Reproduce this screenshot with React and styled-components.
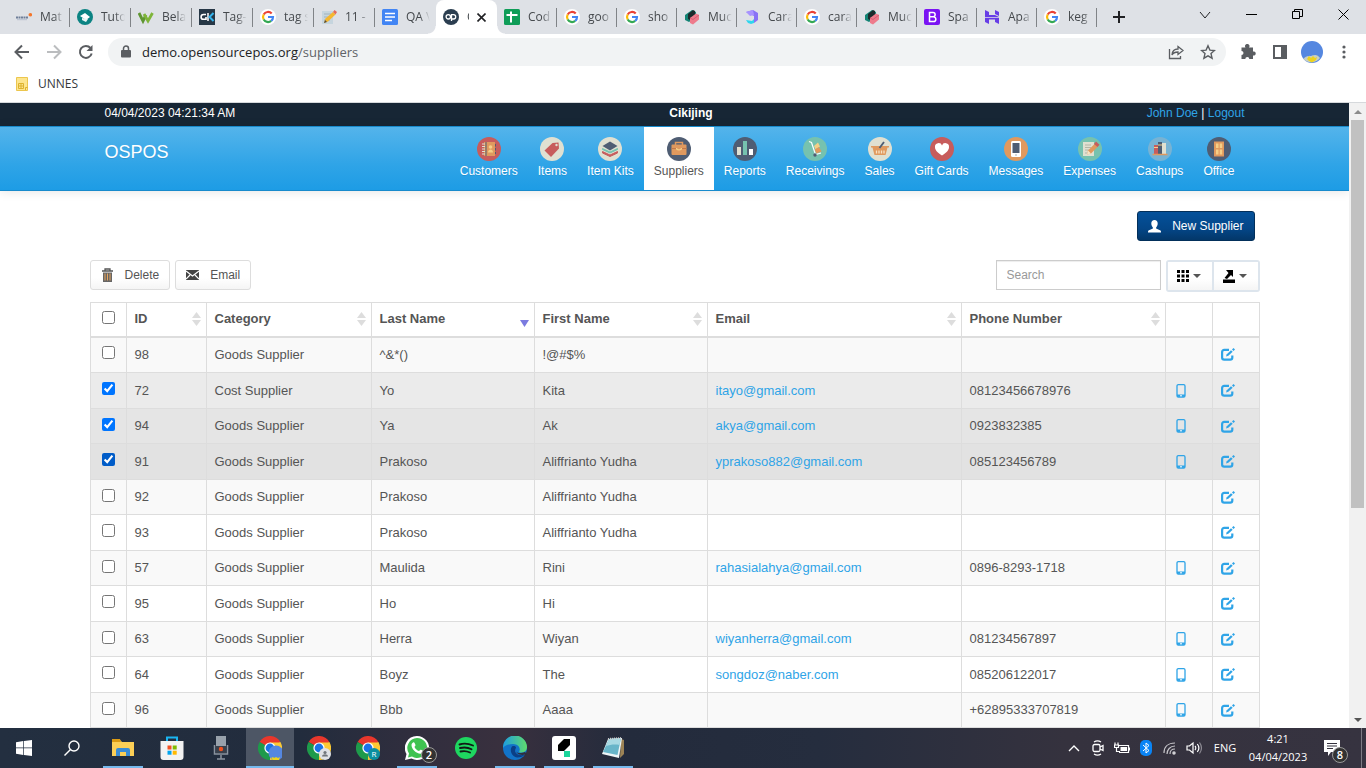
import React from 'react';
import styled, { createGlobalStyle, css } from 'styled-components';

const ui = '"Open Sans", "Noto Sans", sans-serif';
const web = '"Liberation Sans", Arial, sans-serif';

const GlobalStyle = createGlobalStyle`
  *, *::before, *::after { box-sizing: border-box; }
  body { margin: 0; background: #fff; color: #555; font: 13px/18px ${web}; }
  button { font: inherit; color: inherit; border: 0; background: none; padding: 0; }
  a { color: #2fa4e7; text-decoration: none; }
  svg { display: block; flex: none; }
`;

const Screen = styled.div`
  height: 100vh;
  display: grid;
  grid-template-rows: auto auto auto minmax(0, 1fr) auto;
  overflow: hidden;
`;

/* ---------- browser chrome ---------- */

const TabStrip = styled.header`
  display: flex;
  height: 34px;
  padding-left: 9px;
  background: #dee1e6;
  font: 12px/16px ${ui};
  color: #45494d;
`;

const Tab = styled.button`
  flex: 0 1 ${p => p.$w}px;
  min-width: 0;
  display: flex;
  align-items: center;
  gap: 8px;
  height: 34px;
  padding: 0 0 0 7px;
  position: relative;
  text-align: left;
  ${p => p.$active && css`
    background: #fff;
    border-radius: 8px 8px 0 0;
    &::before, &::after {
      content: '';
      position: absolute;
      bottom: 0;
      width: 8px;
      height: 8px;
    }
    &::before { left: -8px; background: radial-gradient(circle at 0 0, transparent 7px, #fff 8px); }
    &::after { right: -8px; background: radial-gradient(circle at 100% 0, transparent 7px, #fff 8px); }
  `}
  ${p => p.$line && css`
    &::after {
      content: '';
      position: absolute;
      right: 0;
      top: 8px;
      width: 1px;
      height: 19px;
      background: #808387;
    }
  `}
`;

const TabTitle = styled.span`
  width: ${p => (p.$w ? `${p.$w}px` : 'auto')};
  white-space: nowrap;
  mask-image: linear-gradient(90deg, #000 14px, transparent 24px);
`;

const NewTab = styled.button`
  width: 44px;
  display: grid;
  place-items: center;
`;

const WindowButtons = styled.div`
  display: flex;
  margin-left: auto;
`;

const WindowButton = styled.button`
  width: 46px;
  height: 29px;
  display: grid;
  place-items: center;
`;

const Toolbar = styled.div`
  display: flex;
  align-items: center;
  height: 36px;
  padding: 0 6px;
`;

const ToolButton = styled.button`
  width: 32px;
  height: 28px;
  display: grid;
  place-items: center;
`;

const Omnibox = styled.div`
  flex: 1;
  display: flex;
  align-items: center;
  height: 28px;
  margin: 0 6px;
  padding: 0 2px 0 12px;
  border-radius: 14px;
  background: #f1f3f4;
`;

const Address = styled.div`
  flex: 1;
  display: flex;
  align-items: center;
  gap: 10px;
`;

const AddressText = styled.a`
  font: 13px/20px ${ui};
  color: #5f6368;
  b { font-weight: 400; color: #202124; }
`;

const Bookmarks = styled.nav`
  display: flex;
  align-items: center;
  height: 33px;
  padding: 0 16px 5px;
  border-bottom: 1px solid #d6d9dc;
`;

const Bookmark = styled.a`
  display: flex;
  align-items: center;
  gap: 10px;
  font: 12px/16px ${ui};
  color: #35383b;
`;

/* ---------- page ---------- */

const Viewport = styled.div`
  display: flex;
  min-height: 0;
  overflow: hidden;
`;

const Page = styled.div`
  flex: 1;
  min-width: 0;
  overflow: hidden;
`;

const Container = styled.div`
  max-width: 1170px;
  margin: 0 auto;
`;

const TopBar = styled.div`
  background: #172635;
  color: #fff;
  font-size: 12px;
`;

const TopBarInner = styled(Container)`
  display: flex;
  justify-content: space-between;
  padding: 1px 15px 4px;
`;

const NavBar = styled.div`
  background: linear-gradient(#54b4eb, #2fa4e7 60%, #1d9ce5);
  border-top: 1px solid #178acc;
  border-bottom: 1px solid #178acc;
  box-shadow: 0 1px 10px rgba(0, 0, 0, 0.1);
`;

const NavInner = styled(Container)`
  display: flex;
  justify-content: space-between;
  padding: 0 15px;
`;

const Brand = styled.a`
  padding-top: 15px;
  font-size: 18px;
  line-height: 20px;
  color: #fff;
  text-shadow: 0 1px 0 rgba(0, 0, 0, 0.1);
`;

const Modules = styled.nav`
  display: flex;
`;

const Module = styled.a`
  display: flex;
  flex-direction: column;
  align-items: center;
  gap: 1px;
  height: 63px;
  padding: 10px 10px 0;
  font-size: 12px;
  color: ${p => (p.$active ? '#555' : '#fff')};
  background: ${p => (p.$active ? '#fff' : 'transparent')};
  text-shadow: ${p => (p.$active ? 'none' : '0 1px 0 rgba(0, 0, 0, 0.1)')};
`;

const TitleBar = styled.div`
  display: flex;
  justify-content: flex-end;
  padding: 20px 5px 19px;
`;

const ActionBar = styled.div`
  display: flex;
  align-items: flex-start;
  gap: 5px;
  padding-bottom: 10px;
`;

const Button = styled.button`
  display: flex;
  align-items: center;
  gap: 11px;
  height: 30px;
  padding: 0 10px;
  border: 1px solid ${p => (p.$primary ? '#022f5a' : '#ddd')};
  border-radius: 3px;
  background: ${p => (p.$primary ? 'linear-gradient(#04519b, #044687 60%, #033769)' : 'linear-gradient(#fff, #fff 60%, #f5f5f5)')};
  color: ${p => (p.$primary ? '#fff' : '#555')};
  font-size: 12px;
`;

const Search = styled.input`
  width: 165px;
  height: 30px;
  margin-left: auto;
  padding: 0 10px;
  border: 1px solid #ccc;
  border-radius: 0;
  box-shadow: inset 0 1px 1px rgba(0, 0, 0, 0.075);
  font: 12px ${web};
  &::placeholder { color: #999; }
`;

const ButtonGroup = styled.div`
  display: flex;
  border: 2px solid #dde5ed;
  border-radius: 3px;
`;

const MenuButton = styled.button`
  display: flex;
  align-items: center;
  justify-content: center;
  gap: 4px;
  width: ${p => (p.$divided ? 46 : 44)}px;
  height: 28px;
  padding-right: 2px;
  background: linear-gradient(#fff, #fff 60%, #f5f5f5);
  border-left: ${p => (p.$divided ? '2px solid #dde5ed' : '0')};
`;

const Table = styled.table`
  width: 100%;
  table-layout: fixed;
  border-collapse: collapse;
  th, td {
    border: 1px solid #ddd;
    padding: 0 8px;
    text-align: left;
    white-space: nowrap;
  }
  th {
    height: 34px;
    padding-right: 5px;
    padding-bottom: 1px;
    border-bottom-width: 2px;
  }
`;

const SortHead = styled.div`
  display: flex;
  align-items: center;
  justify-content: space-between;
`;

const tones = ['', '#ebebeb', '#e5e5e5', '#e2e2e2'];

const Row = styled.tr`
  height: 36px;
  background: #fff;
  &:nth-child(odd) { background: #f9f9f9; }
  &:nth-child(2n + 3) { height: 35px; }
  &&& { ${p => p.$tone > 0 && css`background: ${tones[p.$tone]};`} }
`;

const Check = styled.input`
  display: block;
  width: 13px;
  height: 13px;
  margin: 0 auto 4px;
  accent-color: ${p => (p.$dark ? '#005cc8' : 'auto')};
`;

const CheckCell = styled.td`
  && { padding: 0; }
`;

const ScrollTrack = styled.div`
  width: 17px;
  display: flex;
  flex-direction: column;
  align-items: center;
  background: #f1f1f1;
`;

const ScrollButton = styled.button`
  width: 17px;
  height: 17px;
  display: grid;
  place-items: center;
`;

const ScrollThumb = styled.div`
  width: 13px;
  height: 62%;
  margin-bottom: auto;
  background: #c1c1c1;
`;

/* ---------- taskbar ---------- */

const TaskBar = styled.footer`
  display: flex;
  height: 40px;
  background: linear-gradient(90deg, #232f40, #222c3d 22%, #302e3e 30%, #39303e 37%, #232b3c 46%, #252d3e 60%, #35323e 78%, #363340);
  color: #fff;
`;

const TaskButton = styled.button`
  width: 48px;
  display: grid;
  place-items: center;
  position: relative;
  margin-right: ${p => (p.$pinned ? 1 : 0)}px;
  background: ${p => (p.$active ? '#4d5665' : 'none')};
  &::after {
    content: '';
    position: absolute;
    left: ${p => (p.$active ? 0 : 4)}px;
    right: ${p => (p.$active ? 0 : 4)}px;
    bottom: 0;
    height: 2px;
    background: ${p => (p.$open || p.$active ? '#76b9ed' : 'none')};
  }
`;

const Gap = styled.div`
  width: 3px;
`;

const Badge = styled.span`
  position: absolute;
  left: ${p => p.$x}px;
  top: ${p => p.$y}px;
  width: 16px;
  height: 16px;
  border: 1px solid #9a9a9a;
  border-radius: 50%;
  background: #333;
  font: 600 11px/14px ${ui};
  text-align: center;
`;

const Tray = styled.div`
  display: flex;
  align-items: center;
  margin-left: auto;
  padding-right: 4px;
  font: 11px/18px ${ui};
`;

const TrayButton = styled.button`
  width: 24px;
  height: 40px;
  display: grid;
  place-items: center;
`;

const Language = styled.button`
  width: 38px;
`;

const Clock = styled.button`
  width: 68px;
`;

const Notices = styled.button`
  position: relative;
  width: 40px;
  height: 40px;
  display: grid;
  place-items: center;
`;

const ShowDesktop = styled.button`
  width: 10px;
  height: 40px;
  border-right: 1px solid #7d7b84;
`;

/* ---------- favicons ---------- */

const Fav = ({ children }) => <svg width="16" height="16" viewBox="0 0 16 16">{children}</svg>;

const GoogleIcon = () => (
  <Fav>
    <circle cx="8" cy="8" r="8" fill="#fff" />
    <g fill="none" strokeWidth="2.2">
      <path d="M11.7 4.5A5 5 0 0 0 3.7 5.5" stroke="#ea4335" />
      <path d="M3.7 5.5a5 5 0 0 0 0 5" stroke="#fbbc05" />
      <path d="M3.7 10.5a5 5 0 0 0 7.5 1.4" stroke="#34a853" />
      <path d="M8 8h5a5 5 0 0 1-1.8 3.9" stroke="#4285f4" />
    </g>
  </Fav>
);

const MudIcon = () => (
  <Fav>
    <path d="M1 6l7-5 4 2v5l-7 5-4-2z" fill="#138475" />
    <path d="M4 5l5-4 2 1v5l-5 4-2-1z" fill="#1c2b2c" />
    <path d="M6 9l6-4.500 3 1.500v4.500L9 15.500 6 14z" fill="#ee7b8c" />
    <path d="M6 9l3 1.500 6-4.500" fill="none" stroke="#d45f73" />
  </Fav>
);

const favicons = {
  elearning: (
    <Fav>
      <path d="M0 8.500h12" stroke="#6f7f99" strokeWidth="2" strokeDasharray="2 .5" />
      <circle cx="14.300" cy="5.700" r="1.800" fill="#f4762b" />
      <path d="M1 10.700h10" stroke="#b7c0d0" />
    </Fav>
  ),
  tutor: (
    <Fav>
      <circle cx="8" cy="8" r="8" fill="#0b8383" />
      <path d="M3 7l5-3 5 4-4 3z" fill="#fff" />
      <path d="M5 9v2l4 2 2-3z" fill="#e9f5f4" />
    </Fav>
  ),
  w: (
    <Fav>
      <path d="M1 4l4 8 3-6" fill="none" stroke="#5f9632" strokeWidth="2.800" />
      <path d="M6 5l4 7 4.500-8" fill="none" stroke="#7fb53a" strokeWidth="2.800" />
    </Fav>
  ),
  ok: (
    <Fav>
      <path d="M0 0h16v16H0z" fill="#263746" />
      <path d="M7 5.500H4.500a2.200 2.200 0 0 0 0 4.800H7V8" fill="none" stroke="#fff" strokeWidth="1.600" />
      <path d="M9 4v8" stroke="#fff" strokeWidth="1.500" />
      <path d="M14.500 4L10.500 8l4 4" fill="none" stroke="#35b5ee" strokeWidth="2" />
    </Fav>
  ),
  google: <GoogleIcon />,
  memo: (
    <Fav>
      <path d="M1 2h11v13H1z" fill="#c6d5de" />
      <path d="M3 5h7M3 8h6M3 11h6" stroke="#9fb2bd" />
      <path d="M3 14l1.500-4.500L12 3l2.500 2.500-7.500 7z" fill="#f5b72f" />
      <path d="M12 3l1.500-2L16 3l-1.500 2.500z" fill="#e56b5a" />
      <path d="M3 14l1-3 2 2z" fill="#4e4a43" />
    </Fav>
  ),
  docs: (
    <Fav>
      <rect width="16" height="16" rx="1.500" fill="#4285f4" />
      <path d="M3 4.500h10M3 8h10M3 11.500h7" stroke="#fff" strokeWidth="1.500" />
    </Fav>
  ),
  ospos: (
    <Fav>
      <circle cx="8" cy="8" r="8" fill="#2b3e50" />
      <circle cx="5.300" cy="7.800" r="2.200" fill="none" stroke="#fff" strokeWidth="1.300" />
      <path d="M8.500 12V5.600h2a2.200 2.200 0 0 1 0 4.400H9" fill="none" stroke="#fff" strokeWidth="1.300" />
    </Fav>
  ),
  sheets: (
    <Fav>
      <rect width="16" height="16" rx="1.500" fill="#0f9d58" />
      <path d="M2.500 6h11M7 2.500v11" stroke="#fff" strokeWidth="2" />
    </Fav>
  ),
  mud: <MudIcon />,
  arrow: (
    <Fav>
      <path d="M2 3l7-2 5 3v7l-4 3V7z" fill="#8872f5" />
      <path d="M2 3l7-2 1 5-4 1z" fill="#a893ff" />
      <path d="M2 11l6 1 2-2v4l-3 1-3-1z" fill="#2fd5ee" />
    </Fav>
  ),
  bootstrap: (
    <Fav>
      <rect width="16" height="16" rx="2" fill="#7a13f3" />
      <path d="M5.500 3.500H9a2 2 0 0 1 0 4.300H5.500zM5.500 7.800h4a2.300 2.300 0 0 1 0 4.700h-4z" fill="none" stroke="#fff" strokeWidth="1.500" />
    </Fav>
  ),
  h: (
    <Fav>
      <path d="M1 1l4 2v3h6l4 2H1zM11 1l4 2v4l-4-2zM1 8.700h14V15l-4-2v-2.500H5V15l-4-2z" fill="#673de6" />
    </Fav>
  ),
};

const tabs = [
  ['elearning', 'Mat'], ['tutor', 'Tuto'], ['w', 'Bela'], ['ok', 'Tag-'], ['google', 'tag s'],
  ['memo', '11 -'], ['docs', 'QA \\'], ['ospos', 'O'], ['sheets', 'Cod'], ['google', 'goo'],
  ['google', 'sho'], ['mud', 'Muc'], ['arrow', 'Cara'], ['google', 'cara'], ['mud', 'Muc'],
  ['bootstrap', 'Spa'], ['h', 'Apa'], ['google', 'keg'],
];

/* ---------- line icons ---------- */

const Line = ({ size = 16, w = 1, color = '#202124', children }) => (
  <svg width={size} height={size} viewBox={`0 0 ${size} ${size}`} fill="none" stroke={color} strokeWidth={w}>{children}</svg>
);

const SortIcon = ({ active }) => (
  <svg width="9" height="16" viewBox="0 0 9 16" fill={active ? '#7b7be0' : '#ddd'}>
    {!active && <path d="M4.500 1L9 7H0z" />}
    {active ? <path d="M0 9h9l-4.500 7z" /> : <path d="M0 9h9l-4.500 6z" />}
  </svg>
);

const TrashIcon = () => (
  <svg width="13" height="14" viewBox="0 0 13 14">
    <path d="M1 3h11M4 2.500V1h5v1.500" fill="none" stroke="#555" strokeWidth="1.300" />
    <path d="M2 4.500h9V14H2z" fill="#666" />
    <path d="M4 5.500v7M6.500 5.500v7M9 5.500v7" stroke="#e9a55b" />
  </svg>
);

const MailIcon = () => (
  <svg width="13" height="12" viewBox="0 0 13 12">
    <path d="M0 1h13v10H0z" fill="#444" />
    <path d="M0 2l6.500 5L13 2M0 10l4-4M13 10L9 6" fill="none" stroke="#fff" strokeWidth="1.200" />
  </svg>
);

const UserIcon = () => (
  <svg width="13" height="13" viewBox="0 0 13 13" fill="#fff">
    <path d="M6.500 0C8.500 0 9.700 1.300 9.700 3.500c0 1.800-.8 3.200-1.600 4v1l3.900 1.700c.7.300 1 .8 1 1.600V12.500H0v-.7c0-.8.300-1.300 1-1.600l3.900-1.700v-1c-.8-.8-1.600-2.200-1.600-4C3.300 1.300 4.500 0 6.500 0z" />
  </svg>
);

const GridIcon = () => (
  <svg width="12" height="12" viewBox="0 0 12 12">
    <path d="M0 0h3v3H0zM4.500 0h3v3h-3zM9 0h3v3H9zM0 4.500h3v3H0zM4.500 4.500h3v3h-3zM9 4.500h3v3H9zM0 9h3v3H0zM4.500 9h3v3h-3zM9 9h3v3H9z" />
  </svg>
);

const ExportIcon = () => (
  <svg width="12" height="13" viewBox="0 0 12 13">
    <path d="M0 9.500h12V13H0zM3 0h7v7L8 5 4 9 1.500 8 5.500 3z" />
  </svg>
);

const Caret = () => <svg width="8" height="4" viewBox="0 0 8 4"><path d="M0 0h8L4 4z" fill="#555" /></svg>;

const PhoneIcon = () => (
  <svg width="14" height="14" viewBox="0 0 14 14">
    <rect x="3" y=".7" width="8" height="12.300" rx="1.300" fill="none" stroke="#2fa4e7" strokeWidth="1.300" />
    <path d="M3 10.500h8v2.300H3z" fill="#2fa4e7" />
    <path d="M6 11.800h2" stroke="#fff" />
  </svg>
);

const EditIcon = () => (
  <svg width="14" height="13" viewBox="0 0 14 13" fill="none" stroke="#2fa4e7">
    <path d="M8 1.900H3.200a2.100 2.100 0 0 0-2.100 2.100v5.500a2.100 2.100 0 0 0 2.100 2.100h6a2.100 2.100 0 0 0 2.100-2.100V7.500" strokeWidth="2.200" />
    <path d="M5 8.500l.8-2.200L10 2.200l1.700 1.600-4.400 4z" fill="#2fa4e7" stroke="none" />
    <path d="M11 1.500l1.500 1.600L14 1.600 12.500 0z" fill="#2fa4e7" stroke="none" />
  </svg>
);

/* ---------- module icons ---------- */

const Disc = ({ bg, children }) => (
  <svg width="24" height="24" viewBox="0 0 24 24"><circle cx="12" cy="12" r="12" fill={bg} />{children}</svg>
);

const modules = [
  ['Customers', <Disc bg="#c75c5c"><path d="M7 5h11v14H7z" fill="#e0995e" /><path d="M9 5v14" stroke="#4f5d73" /><path d="M5 7h3M5 9.500h3M5 12h3M5 14.500h3M5 17h3" stroke="#e0e0d1" /><circle cx="13.500" cy="10" r="1.800" fill="#f5cf87" /><path d="M11 15.500c0-4 5-4 5 0z" fill="#f5cf87" /><path d="M18.500 7v10" stroke="#4f5d73" strokeDasharray="2.500 1.500" /></Disc>],
  ['Items', <Disc bg="#e0e0d1"><path d="M4.500 13.500L12.500 6l6-.5.5 6-8 8.500z" fill="#c75c5c" /><circle cx="16.500" cy="8" r="1.200" fill="#e0e0d1" /></Disc>],
  ['Item Kits', <Disc bg="#e0e0d1"><path d="M4.500 14.500l7.500 3.500 7.500-3.500v1.500L12 19.500 4.500 16z" fill="#c75c5c" stroke="#c75c5c" /><path d="M4.500 11.500L12 15l7.500-3.500v1L12 16l-7.500-3.500z" fill="#76c2af" stroke="#76c2af" /><path d="M4.500 9L12 4.500 19.500 9 12 13.500z" fill="#4f5d73" /></Disc>],
  ['Suppliers', <Disc bg="#4f5d73"><path d="M8.500 8V5.500h7V8" fill="none" stroke="#e0995e" strokeWidth="1.500" /><rect x="4.500" y="7.500" width="15" height="10.500" rx="1" fill="#e0995e" /><path d="M4.500 11.500h5M14.500 11.500h5" stroke="#c2794a" /><path d="M9.500 11c0 2.500 5 2.500 5 0" fill="none" stroke="#f5cf87" strokeWidth="1.300" /></Disc>],
  ['Reports', <Disc bg="#4f5d73"><path d="M4 10h4v8H4z" fill="#e0e0d1" /><path d="M10 4h4v14h-4z" fill="#76c2af" /><path d="M16 12h4v6h-4z" fill="#fff" /></Disc>],
  ['Receivings', <Disc bg="#76c2af"><path d="M11 9l4-3.500 2 4-4.500 3z" fill="#f5cf87" /><path d="M11.500 12.500l4.500-2.500 2.500 4.500-5 2z" fill="#e0995e" /><path d="M6 4.500l2.500 1 4 12 5.500-1.500" fill="none" stroke="#fff" strokeWidth="1.200" /><circle cx="12" cy="18" r="1.700" fill="#4f5d73" /></Disc>],
  ['Sales', <Disc bg="#e0e0d1"><path d="M3 9h18v1.500h-1.500L17.500 18h-11l-2-7.500H3z" fill="#e0995e" /><path d="M8.500 13.500v3M11 13.500v3M13.500 13.500v3M16 13.500v3" stroke="#f8e2c5" strokeWidth="1.300" /><path d="M16 5l-4.500 6" stroke="#4f5d73" strokeWidth="1.800" /></Disc>],
  ['Gift Cards', <Disc bg="#c75c5c"><path d="M12 18.500C6.500 15 5 12.500 5 10a3.600 3.600 0 0 1 7-1.400A3.600 3.600 0 0 1 19 10c0 2.500-1.500 5-7 8.500z" fill="#fff" /></Disc>],
  ['Messages', <Disc bg="#e0995e"><rect x="7" y="4" width="10" height="16" rx="1.500" fill="#fff" /><path d="M8.500 6h7v10h-7z" fill="#4f5d73" /><circle cx="12" cy="18" r="1" fill="#c4ccd4" /></Disc>],
  ['Expenses', <Disc bg="#76c2af"><path d="M5 5h11v14H5z" fill="#e0e0d1" /><path d="M7 8h6M7 10.500h6M7 13h4M7 16h3" stroke="#b3b6a6" /><path d="M9 17.500l1-4 7-7 3 3-7 7z" fill="#e0995e" /><path d="M16 7l2-2.500 3.500 3.200L19.500 10z" fill="#c75c5c" /><path d="M9 17.500l1-4 3 3z" fill="#f5e4c5" /></Disc>],
  ['Cashups', <Disc bg="#77b3d4"><path d="M6 8h4v9H6z" fill="#c75c5c" /><path d="M10 5h4v12h-4z" fill="#4f5d73" /><path d="M14 6h4v11h-4z" fill="#e0e0d1" /><path d="M4.500 17.500h15" stroke="#e0995e" strokeWidth="1.500" /><path d="M6 10.500h4M10 8h4" stroke="#f5cf87" /></Disc>],
  ['Office', <Disc bg="#4f5d73"><path d="M7 4.500h10v15H7z" fill="#e0995e" /><path d="M9 6.500h2.500v4.500H9zM12.700 6.500h2.500v4.500h-2.500zM9 12.500h2.500v5H9zM12.700 12.500h2.500v5h-2.500z" fill="#f5cf87" /></Disc>],
];

/* ---------- taskbar icons ---------- */

const Svg24 = ({ children }) => <svg width="24" height="24" viewBox="0 0 24 24">{children}</svg>;

const ChromeIcon = ({ children }) => (
  <Svg24>
    <path d="M12 12L1.600 6A12 12 0 0 1 22.400 6z" fill="#e8372c" />
    <path d="M12 12L22.400 6A12 12 0 0 1 12 24z" fill="#fcc934" />
    <path d="M12 12v12A12 12 0 0 1 1.600 6z" fill="#1e9a4b" />
    <path d="M12 6.500h10.400L17 15z" fill="#fcc934" />
    <circle cx="12" cy="12" r="5.600" fill="#fff" />
    <circle cx="12" cy="12" r="4.400" fill="#1a73e8" />
    {children}
  </Svg24>
);

const Avatar = ({ size }) => (
  <svg width={size} height={size} viewBox="0 0 22 22">
    <circle cx="11" cy="11" r="11" fill="#5587e0" />
    <path d="M2.500 18C6 13.500 9 16 11 14.500c3-1 6-1 8 2.500a11 11 0 0 1-16.500 1z" fill="#c9d0c2" />
    <path d="M6 18l2-3 2 2 2-2 2 2 2-1-1 3-4 2.500L8 20z" fill="#edd31e" />
  </svg>
);

const taskApps = [
  { name: 'File Explorer', open: true, icon: <Svg24><path d="M1 4h8l2 2h12v14H1z" fill="#fccf56" /><path d="M1 3h8l1 3H1z" fill="#db9b14" /><path d="M5 20v-6a2 2 0 0 1 2-2h10a2 2 0 0 1 2 2v6h-4v-4H9v4z" fill="#3a8cd5" /></Svg24> },
  { name: 'Microsoft Store', icon: <Svg24><path d="M7 6V1.500h10V6" fill="none" stroke="#1ab5f2" strokeWidth="2" /><path d="M0.500 5h23v16a3 3 0 0 1-3 3h-17a3 3 0 0 1-3-3z" fill="#f2f2f2" /><path d="M7.500 9.500h4v4h-4z" fill="#f25022" /><path d="M12.700 9.500h4v4h-4z" fill="#7fba00" /><path d="M7.500 14.700h4v4h-4z" fill="#00a4ef" /><path d="M12.700 14.700h4v4h-4z" fill="#ffb900" /></Svg24> },
  { name: 'Voice Recorder', icon: <Svg24><path d="M7 0h10v10H7z" fill="#98a1ab" /><path d="M7 10h10v7H7z" fill="#39404b" /><circle cx="12" cy="13" r="2.200" fill="#f0501e" /><path d="M5.500 9v9h13V9M12 19v4M8 23h8" fill="none" stroke="#8a939e" strokeWidth="1.500" /></Svg24> },
  { name: 'Chrome', active: true, icon: <ChromeIcon><circle cx="18" cy="17" r="7.500" fill="#5587e0" /><path d="M13 22l2-1 1 1 2-1 2 1 2-1-1 3h-6z" fill="#edd31e" /></ChromeIcon> },
  { name: 'Chrome guest', icon: <ChromeIcon><circle cx="18" cy="18" r="6" fill="#dfe1e5" /><circle cx="18" cy="16.500" r="1.600" fill="#70757a" /><path d="M15 20.500c0-3 6-3 6 0z" fill="#70757a" /></ChromeIcon> },
  { name: 'Chrome R', icon: <ChromeIcon><circle cx="18" cy="18" r="6" fill="#0b8f9f" /><text x="18" y="21" fontSize="8" textAnchor="middle" fill="#fff" fontFamily="Open Sans">R</text></ChromeIcon> },
  { name: 'WhatsApp', open: true, badge: true, icon: <Svg24><path d="M12 0a12 12 0 1 1-5.500 22.600L0 24l1.500-6A12 12 0 0 1 12 0z" fill="#fff" /><path d="M12 2a10 10 0 1 1-5 18.600L3 21.500l1-4A10 10 0 0 1 12 2z" fill="#3fc351" /><path d="M8 6.500c1-.5 1.500 0 2.500 2.500 0 1-1 1.500-1 2 1 2 2.500 3.500 4.500 4 1-.8 1.500-1.500 2-1.200l2 1c.5.500-.5 3-2.500 3C11 17.500 6.500 13 6.500 9c0-1.200.8-2 1.500-2.500z" fill="#fff" /></Svg24> },
  { name: 'Spotify', icon: <Svg24><circle cx="12" cy="12" r="11" fill="#1ed760" /><path d="M5.500 8.500c4.500-1.500 9-1 13.500 1M6 12c4-1 8-.7 11.500 1.300M6.500 15.500c3.500-.8 6.500-.5 9.500 1" fill="none" stroke="#111a15" strokeWidth="1.900" strokeLinecap="round" /></Svg24> },
  { name: 'Edge', open: true, icon: <Svg24><defs><linearGradient id="edge-a"><stop stopColor="#1e9de0" /><stop offset="1" stopColor="#5fdc6c" /></linearGradient></defs><circle cx="12" cy="12" r="12" fill="#1273c8" /><path d="M0 12A12 12 0 0 1 24 11c0 5-5 6.500-8 5 2-3 0-8-6-8C5 8 1 10 0 12z" fill="url(#edge-a)" /><path d="M9 10.500c-3 4 0 10 5 11 3 .2 6-1 8-3-5 2-10-.5-10-4 0-1.500 1-2 1-3s-2-2-4-1z" fill="#0b3f86" /><path d="M13 13c-1 3 2 5.500 9 3l2 2-7 5c2-1 4-2.500 5-4.500-5 1.500-10-1.500-9-5.500z" fill="#302f3e" /></Svg24> },
  { name: 'Katalon', open: true, icon: <Svg24><rect width="24" height="24" rx="3" fill="#fff" /><path d="M6 9l6-6h6v6l-6 6H6z" fill="#000" /><path d="M12 15h6v6h-6z" fill="#1cd69b" /></Svg24> },
  { name: 'Notepad', open: true, icon: <Svg24><path d="M20 3l3 1v14l-4 4z" fill="#9c8355" /><path d="M7 3l14-1-3 20-17-4z" fill="#eef5f7" /><path d="M8 3l12-1-3.500 17L2 16z" fill="#68b5c9" /><path d="M8 3l12-1-1.500 7C13 8 9 9 5 10z" fill="#a8d9e3" /><path d="M7 3l14-1" stroke="#ccc" strokeDasharray="1 1" strokeWidth="2" /></Svg24> },
];

/* ---------- data ---------- */

const columns = [
  ['ID', 80], ['Category', 165], ['Last Name', 163], ['First Name', 173], ['Email', 254], ['Phone Number', 204],
];

const suppliers = [
  ['98', 'Goods Supplier', '^&*()', '!@#$%', '', '', 0],
  ['72', 'Cost Supplier', 'Yo', 'Kita', 'itayo@gmail.com', '08123456678976', 1],
  ['94', 'Goods Supplier', 'Ya', 'Ak', 'akya@gmail.com', '0923832385', 2],
  ['91', 'Goods Supplier', 'Prakoso', 'Aliffrianto Yudha', 'yprakoso882@gmail.com', '085123456789', 3],
  ['92', 'Goods Supplier', 'Prakoso', 'Aliffrianto Yudha', '', '', 0],
  ['93', 'Goods Supplier', 'Prakoso', 'Aliffrianto Yudha', '', '', 0],
  ['57', 'Goods Supplier', 'Maulida', 'Rini', 'rahasialahya@gmail.com', '0896-8293-1718', 0],
  ['95', 'Goods Supplier', 'Ho', 'Hi', '', '', 0],
  ['63', 'Goods Supplier', 'Herra', 'Wiyan', 'wiyanherra@gmail.com', '081234567897', 0],
  ['64', 'Goods Supplier', 'Boyz', 'The', 'songdoz@naber.com', '085206122017', 0],
  ['96', 'Goods Supplier', 'Bbb', 'Aaaa', '', '+62895333707819', 0],
];

function Browser() {
  return (
    <>
      <TabStrip>
        {tabs.map(([icon, title], i) => (
          <Tab key={i} $w={i < 8 ? 61 : 60} $active={i === 7} $line={i !== 6 && i !== 7}>
            {favicons[icon]}
            <TabTitle $w={i === 7 ? 2 : 0}>{title}</TabTitle>
            {i === 7 && <Line size={9} w={1.6}><path d="M.5.5l8 8M8.500.5l-8 8" /></Line>}
          </Tab>
        ))}
        <NewTab aria-label="New tab"><Line size={12} w={2}><path d="M6 0v12M0 6h12" /></Line></NewTab>
        <WindowButtons>
          <WindowButton aria-label="Search tabs"><Line size={12}><path d="M1 3l5 6 5-6" /></Line></WindowButton>
          <WindowButton aria-label="Minimize"><Line size={11} color="#000"><path d="M0 5.500h11" /></Line></WindowButton>
          <WindowButton aria-label="Restore"><Line size={11} color="#000"><path d="M.5 2.500h7v7h-7zM2.500 2.500v-2h8v7h-3" /></Line></WindowButton>
          <WindowButton aria-label="Close"><Line size={11} color="#000"><path d="M.5.5l10 10M10.500.5l-10 10" /></Line></WindowButton>
        </WindowButtons>
      </TabStrip>
      <Toolbar>
        <ToolButton aria-label="Back"><Line w={2} color="#5a5d61"><path d="M15 8H2M8 1.500L1.500 8 8 14.500" /></Line></ToolButton>
        <ToolButton aria-label="Forward"><Line w={2} color="#bbbdbf"><path d="M1 8h13M8 1.500L14.500 8 8 14.500" /></Line></ToolButton>
        <ToolButton aria-label="Reload"><Line w={2} color="#5a5d61"><path d="M13.700 9.500A6 6 0 1 1 12.500 4" /><path d="M14.500 1v6h-6z" fill="#5a5d61" stroke="none" /></Line></ToolButton>
        <Omnibox>
          <Address>
            <svg width="12" height="14" viewBox="0 0 12 14"><path d="M2 5h8a1 1 0 0 1 1 1v5.500a1 1 0 0 1-1 1H2a1 1 0 0 1-1-1V6a1 1 0 0 1 1-1z" fill="#5a5d61" /><path d="M3.500 5V3.500a2.500 2.500 0 0 1 5 0V5" fill="none" stroke="#5a5d61" strokeWidth="1.500" /></svg>
            <AddressText href="#suppliers"><b>demo.opensourcepos.org</b>/suppliers</AddressText>
          </Address>
          <ToolButton aria-label="Share"><Line w={1.3} color="#5a5d61"><path d="M1.500 5v9.500h11V12" /><path d="M10 2.500l5 4-5 4V8c-3 0-5 1-6 3 .2-3.500 2-6 6-6z" /></Line></ToolButton>
          <ToolButton aria-label="Bookmark"><Line w={1.4} color="#5a5d61"><path d="M8 1.800l1.900 4.300 4.600.4-3.500 3.100 1.100 4.600L8 11.800l-4.100 2.400L5 9.600 1.500 6.500l4.600-.4z" /></Line></ToolButton>
        </Omnibox>
        <ToolButton aria-label="Extensions"><svg width="16" height="16" viewBox="0 0 16 16"><path d="M1.500 3.500h4a2.200 2.200 0 1 1 3.500 0h4V7.500a2.100 2.100 0 1 1 0 4V15H9.300a2 2 0 1 0-4 0H1.500v-4a2 2 0 1 0 0-4z" fill="#5a5d61" /></svg></ToolButton>
        <ToolButton aria-label="Side panel"><Line w={2} color="#5a5d61"><path d="M2 2h12v12H2z" /><path d="M10 2h4v12h-4z" fill="#5a5d61" /></Line></ToolButton>
        <ToolButton aria-label="Profile"><Avatar size={22} /></ToolButton>
        <ToolButton aria-label="Menu"><svg width="4" height="14" viewBox="0 0 4 14" fill="#5a5d61"><circle cx="2" cy="2" r="1.600" /><circle cx="2" cy="7" r="1.600" /><circle cx="2" cy="12" r="1.600" /></svg></ToolButton>
      </Toolbar>
      <Bookmarks>
        <Bookmark href="#unnes">
          <svg width="12" height="14" viewBox="0 0 12 14"><path d="M.5.5h11v13H.5z" fill="#fde58d" stroke="#ecc64e" /><path d="M2.500 6.500h5v5h-5zM5 6.500v5M2.500 9h5M9.500 13v-2.500h2" fill="none" stroke="#ddb22f" /></svg>
          UNNES
        </Bookmark>
      </Bookmarks>
    </>
  );
}

function SupplierTable() {
  return (
    <Table>
      <colgroup>
        <col style={{ width: 36 }} />
        {columns.map(([name, w]) => <col key={name} style={{ width: w }} />)}
        <col style={{ width: 47 }} />
        <col style={{ width: 47 }} />
      </colgroup>
      <thead>
        <tr>
          <CheckCell as="th"><Check type="checkbox" aria-label="Select all" /></CheckCell>
          {columns.map(([name]) => (
            <th key={name}><SortHead>{name}<SortIcon active={name === 'Last Name'} /></SortHead></th>
          ))}
          <th /><th />
        </tr>
      </thead>
      <tbody>
        {suppliers.map(([id, category, last, first, email, phone, tone]) => (
          <Row key={id} $tone={tone}>
            <CheckCell><Check type="checkbox" aria-label={`Select ${id}`} defaultChecked={tone > 0} $dark={tone === 3} /></CheckCell>
            <td>{id}</td>
            <td>{category}</td>
            <td>{last}</td>
            <td>{first}</td>
            <td>{email && <a href={`mailto:${email}`}>{email}</a>}</td>
            <td>{phone}</td>
            <td>{phone && <a href="#sms" aria-label="Send SMS"><PhoneIcon /></a>}</td>
            <td><a href="#edit" aria-label="Edit"><EditIcon /></a></td>
          </Row>
        ))}
      </tbody>
    </Table>
  );
}

function Windows() {
  return (
    <TaskBar>
      <TaskButton aria-label="Start"><svg width="16" height="16" viewBox="0 0 16 16" fill="#fff"><path d="M0 2.200L7.300 1v6.600H0zM8 .9L16 0v7.600H8zM0 8.300h7.300V15L0 13.800zM8 8.300h8V16l-8-1z" /></svg></TaskButton>
      <TaskButton aria-label="Search"><Line w={1.4} color="#fff"><circle cx="10" cy="6" r="5" /><path d="M6.500 9.500L.5 15.500" /></Line></TaskButton>
      <Gap />
      {taskApps.map(app => (
        <TaskButton key={app.name} aria-label={app.name} $pinned $open={app.open} $active={app.active}>
          {app.icon}
          {app.badge && <Badge $x={28} $y={19}>2</Badge>}
        </TaskButton>
      ))}
      <Tray>
        <TrayButton aria-label="Hidden icons"><Line size={12} w={1.4} color="#fff"><path d="M1 9l5-5 5 5" /></Line></TrayButton>
        <TrayButton aria-label="Meet now"><Line w={1.3} color="#fff"><rect x="3" y="4.500" width="7" height="7" rx="1.500" /><path d="M10 7l3-1.500v5L10 9M4 2c2-1.300 5-1.300 7 0M4 14c2 1.300 5 1.300 7 0" /></Line></TrayButton>
        <TrayButton aria-label="Battery"><Line w={1.2} color="#fff"><path d="M5 5.500h9.500v7H5" /><path d="M6.500 7h6.500v4H6.500z" fill="#fff" stroke="none" /><path d="M1 2.500v2M4 2.500v2M.5 5h4v2.500h-4zM2.500 7.500v4H6M15.500 7.500v3" /></Line></TrayButton>
        <TrayButton aria-label="Bluetooth"><svg width="12" height="16" viewBox="0 0 12 16"><rect width="12" height="16" rx="5" fill="#0a84f5" /><path d="M3 5l6 5.500L6 13V3l3 2.500L3 11" fill="none" stroke="#fff" /></svg></TrayButton>
        <TrayButton aria-label="Wi-Fi"><Line w={1.2} color="#c5c4c9"><path d="M2 13C2 7 6 3 13 3M5 14c0-4 3-8 8-8M8 14c0-3 2-5 5-5" /><circle cx="12" cy="13" r="1.200" fill="#fff" /></Line></TrayButton>
        <TrayButton aria-label="Volume"><Line w={1.2} color="#fff"><path d="M1 6h2.500L7 3v10L3.500 10H1zM9 6c1 1 1 3 0 4M11.300 4c2 2.500 2 5.500 0 8" /><path d="M13.500 2.500c2.500 3.500 2.500 7.500 0 11" stroke="#8b8992" /></Line></TrayButton>
        <Language>ENG</Language>
        <Clock>4:21<br />04/04/2023</Clock>
        <Notices aria-label="Notifications">
          <svg width="16" height="16" viewBox="0 0 16 16"><path d="M0 0h16v12H7l-3 4v-4H0z" fill="#fff" /><path d="M3 3.500h10M3 6h10M3 8.500h6" stroke="#35323e" /></svg>
          <Badge $x={20} $y={19}>8</Badge>
        </Notices>
        <ShowDesktop aria-label="Show desktop" />
      </Tray>
    </TaskBar>
  );
}

export default function App() {
  return (
    <Screen>
      <GlobalStyle />
      <Browser />
      <Viewport>
        <Page>
          <TopBar>
            <TopBarInner>
              <span>04/04/2023 04:21:34 AM</span>
              <strong>Cikijing</strong>
              <span><a href="#profile">John Doe</a> | <a href="#logout">Logout</a></span>
            </TopBarInner>
          </TopBar>
          <NavBar>
            <NavInner>
              <Brand href="#home">OSPOS</Brand>
              <Modules>
                {modules.map(([name, icon]) => (
                  <Module key={name} href={`#${name}`} $active={name === 'Suppliers'}>{icon}{name}</Module>
                ))}
              </Modules>
            </NavInner>
          </NavBar>
          <Container>
            <TitleBar><Button $primary><UserIcon />New Supplier</Button></TitleBar>
            <ActionBar>
              <Button><TrashIcon />Delete</Button>
              <Button><MailIcon />Email</Button>
              <Search type="text" placeholder="Search" aria-label="Search" />
              <ButtonGroup>
                <MenuButton aria-label="Columns"><GridIcon /><Caret /></MenuButton>
                <MenuButton aria-label="Export" $divided><ExportIcon /><Caret /></MenuButton>
              </ButtonGroup>
            </ActionBar>
            <SupplierTable />
          </Container>
        </Page>
        <ScrollTrack>
          <ScrollButton aria-label="Scroll up"><svg width="8" height="4" viewBox="0 0 8 4"><path d="M0 4h8L4 0z" fill="#8b8b8b" /></svg></ScrollButton>
          <ScrollThumb />
          <ScrollButton aria-label="Scroll down"><Caret /></ScrollButton>
        </ScrollTrack>
      </Viewport>
      <Windows />
    </Screen>
  );
}
